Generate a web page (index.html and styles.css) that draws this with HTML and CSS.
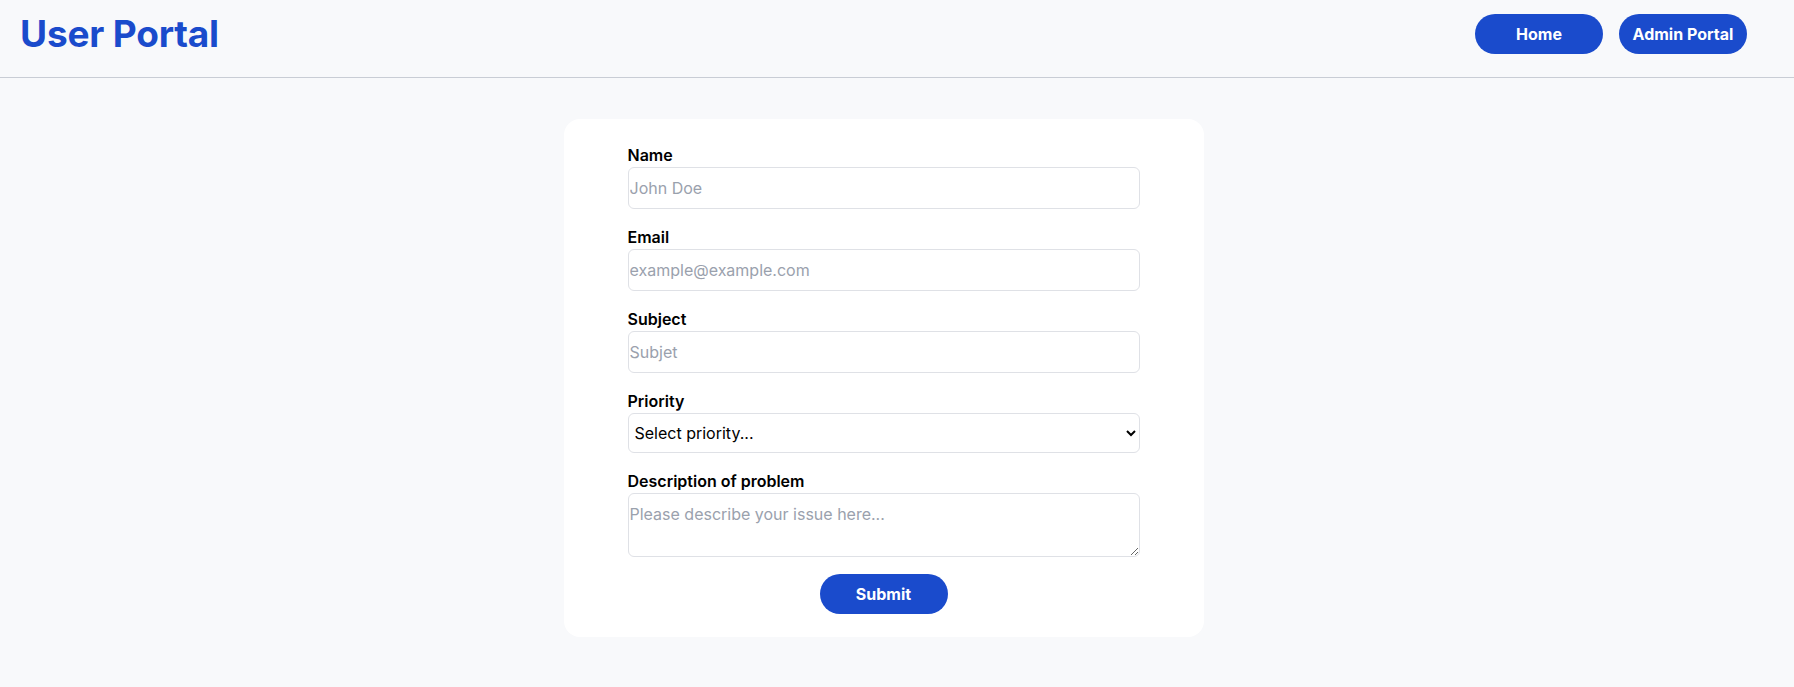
FILE: index.html
```html
<!DOCTYPE html>
<html lang="en">
<head>
<meta charset="utf-8">
<title>User Portal</title>
<link rel="stylesheet" href="styles.css">
</head>
<body>
<header class="topbar">
  <h1 class="brand">User Portal</h1>
  <nav class="nav">
    <a class="pill" href="#">Home</a>
    <a class="pill" href="#">Admin Portal</a>
  </nav>
</header>
<main class="main">
  <form class="card">
    <div class="field">
      <label class="label" for="name">Name</label>
      <input class="control" id="name" type="text" placeholder="John Doe">
    </div>
    <div class="field">
      <label class="label" for="email">Email</label>
      <input class="control" id="email" type="email" placeholder="example@example.com">
    </div>
    <div class="field">
      <label class="label" for="subject">Subject</label>
      <input class="control" id="subject" type="text" placeholder="Subjet">
    </div>
    <div class="field">
      <label class="label" for="priority">Priority</label>
      <select class="select" id="priority">
        <option>Select priority...</option>
        <option>Low</option>
        <option>Medium</option>
        <option>High</option>
      </select>
    </div>
    <div class="field">
      <label class="label" for="desc">Description of problem</label>
      <textarea class="control area" id="desc" rows="2" placeholder="Please describe your issue here..."></textarea>
    </div>
    <div class="actions">
      <button class="pill submit" type="submit">Submit</button>
    </div>
  </form>
</main>
</body>
</html>
```
FILE: styles.css
```css
* { box-sizing: border-box; }
html, body { margin: 0; padding: 0; }
body {
  background: #f8f9fb;
  font-family: Inter, "Noto Sans", sans-serif;
  color: #000;
}
.topbar {
  height: 78px;
  display: flex;
  align-items: flex-start;
  justify-content: space-between;
  padding: 14px 47px 0 20px;
  border-bottom: 1px solid #c9cdd5;
}
.brand {
  margin: 0;
  font-size: 37px;
  line-height: 40px;
  font-weight: 700;
  color: #1a4bcc;
  letter-spacing: -0.2px;
}
.nav { display: flex; gap: 16px; }
.pill {
  display: inline-flex;
  align-items: center;
  justify-content: center;
  width: 128px;
  height: 40px;
  border-radius: 999px;
  background: #1a4bcc;
  color: #fff;
  font-family: Inter, "Noto Sans", sans-serif;
  font-size: 16px;
  font-weight: 700;
  text-decoration: none;
  border: 0;
}
.main {
  display: flex;
  justify-content: center;
  padding: 41px 27px 0 0;
}
.card {
  width: 640px;
  background: #fff;
  border-radius: 16px;
  padding: 24px 64px 23px;
  display: flex;
  flex-direction: column;
  gap: 16px;
}
.field { display: flex; flex-direction: column; }
.label {
  font-size: 16px;
  line-height: 24px;
  font-weight: 600;
}
.control {
  font-family: Inter, "Noto Sans", sans-serif;
  font-size: 16px;
  line-height: 24px;
  padding: 8px 1px;
  height: 42px;
  border: 1px solid #dfe1e6;
  border-radius: 6px;
  color: #111;
  background: #fff;
  outline: none;
}
.control::placeholder { color: #9aa1ad; }
.area { height: 64px; resize: vertical; }
.select {
  font-family: Inter, "Noto Sans", sans-serif;
  font-size: 16px;
  height: 40px;
  padding: 0 2px;
  border: 1px solid #dfe1e6;
  border-radius: 6px;
  background: #fff;
  color: #000;
}
.actions { display: flex; justify-content: center; padding-top: 1px; }
.submit { cursor: pointer; }
```
